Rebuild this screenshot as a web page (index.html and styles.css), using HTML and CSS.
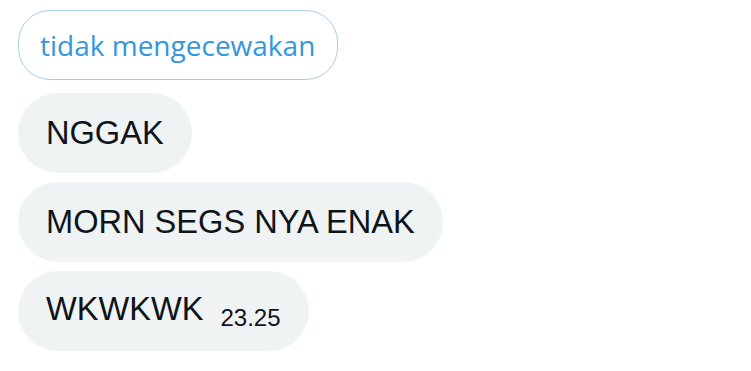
FILE: index.html
```html
<!DOCTYPE html>
<html lang="id">

<head>
    <meta charset="UTF-8">
    <title>Pesan</title>
    <link rel="stylesheet" href="styles.css">
</head>

<body>
    <div class="chat">
        <div class="quick-reply">tidak mengecewakan</div>
        <div class="bubble"><span>NGGAK</span></div>
        <div class="bubble"><span>MORN SEGS NYA ENAK</span></div>
        <div class="bubble"><span>WKWKWK <span class="time">23.25</span></span></div>
    </div>
</body>

</html>
```

FILE: styles.css
```css
body {
    margin: 0;
    background-color: #ffffff;
    font-family: "Liberation Sans", Arial, sans-serif;
}

.chat {
    display: flex;
    flex-direction: column;
    align-items: flex-start;
    padding: 10px 18px;
}

.quick-reply {
    height: 68px;
    padding: 0 22px 0 21px;
    display: flex;
    align-items: center;
    border: 1px solid #a9cdea;
    border-radius: 32px;
    color: #3496dc;
    font-family: "Open Sans", "Noto Sans", sans-serif;
    font-size: 28px;
    margin-bottom: 13px;
}

.bubble {
    height: 80px;
    padding: 0 28px;
    display: flex;
    align-items: center;
    background-color: #eff3f4;
    border-radius: 40px;
    color: #0f1419;
    font-size: 32.6px;
    margin-bottom: 9px;
}

.time {
    display: inline-block;
    font-size: 24px;
    margin-left: 8px;
    vertical-align: -6px;
}
```
